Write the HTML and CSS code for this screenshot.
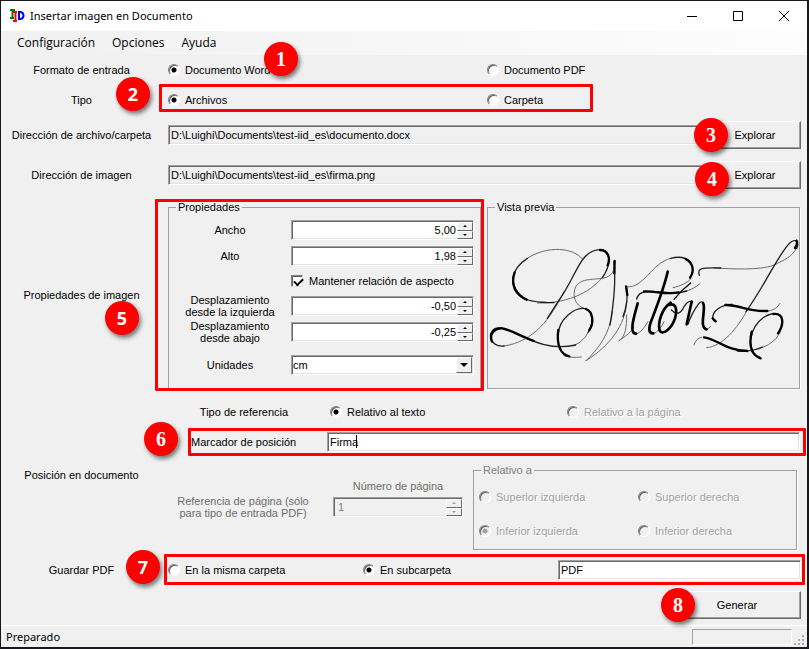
FILE: index.html
```html
<!DOCTYPE html>
<html lang="es">
<head>
<meta charset="utf-8">
<title>Insertar imagen en Documento</title>
<link rel="stylesheet" href="styles.css">
</head>
<body>
<div class="window">
  <header class="titlebar">
    <svg class="app-icon" viewBox="0 0 16 16" aria-hidden="true">
      <path d="M1 2h5M3.500 2v8M1 10h4" stroke="#008000" stroke-width="2" fill="none"/>
      <path d="M4 4h4M6.500 4v9M4 13h4" stroke="#f00" stroke-width="2" fill="none"/>
      <path d="M10 4v7h1.500q3-.5 3-3.500t-3-3.500z" stroke="#00f" stroke-width="2" fill="none"/>
    </svg>
    <h1>Insertar imagen en Documento</h1>
    <button class="caption" aria-label="Minimizar"><svg viewBox="0 0 12 12"><path d="M1 6.500h10"/></svg></button>
    <button class="caption" aria-label="Maximizar"><svg viewBox="0 0 12 12"><path d="M1.500 1.500h9v9h-9z"/></svg></button>
    <button class="caption" aria-label="Cerrar"><svg viewBox="0 0 12 12"><path d="M1 1l10 10M11 1L1 11"/></svg></button>
  </header>
  <nav class="menu"><button>Configuración</button><button>Opciones</button><button>Ayuda</button></nav>

  <main class="form">
    <div class="row">
      <span class="label">Formato de entrada</span>
      <div class="halves">
        <label class="opt"><input type="radio" name="formato" checked>Documento Word</label>
        <label class="opt"><input type="radio" name="formato">Documento PDF</label>
      </div>
      <span class="badge b1">1</span>
    </div>
    <div class="row">
      <span class="label">Tipo</span>
      <div class="halves">
        <label class="opt"><input type="radio" name="tipo" checked>Archivos</label>
        <label class="opt"><input type="radio" name="tipo">Carpeta</label>
      </div>
      <span class="mark m-tipo"></span><span class="badge sans b2">2</span>
    </div>
    <div class="row tall">
      <label class="label" for="archivo">Dirección de archivo/carpeta</label>
      <div class="path"><input class="field ro" id="archivo" type="text" readonly value="D:\Luighi\Documents\test-iid_es\documento.docx"><button class="btn">Explorar</button></div>
      <span class="badge b3">3</span>
    </div>
    <div class="row tall">
      <label class="label" for="imagen">Dirección de imagen</label>
      <div class="path"><input class="field ro" id="imagen" type="text" readonly value="D:\Luighi\Documents\test-iid_es\firma.png"><button class="btn">Explorar</button></div>
      <span class="badge b4">4</span>
    </div>

    <div class="row">
      <span class="label">Propiedades de imagen</span>
      <div class="halves groups">
        <fieldset class="group">
          <legend>Propiedades</legend>
          <div class="props">
            <label for="ancho">Ancho</label>
            <div class="spin"><input class="field" id="ancho" type="text" value="5,00"><span class="steps"><button aria-label="Más"></button><button class="down" aria-label="Menos"></button></span></div>
            <label for="alto">Alto</label>
            <div class="spin"><input class="field" id="alto" type="text" value="1,98"><span class="steps"><button aria-label="Más"></button><button class="down" aria-label="Menos"></button></span></div>
            <label class="opt check"><input type="checkbox" checked>Mantener relación de aspecto</label>
            <label for="dx">Desplazamiento desde la izquierda</label>
            <div class="spin"><input class="field" id="dx" type="text" value="-0,50"><span class="steps"><button aria-label="Más"></button><button class="down" aria-label="Menos"></button></span></div>
            <label for="dy">Desplazamiento desde abajo</label>
            <div class="spin"><input class="field" id="dy" type="text" value="-0,25"><span class="steps"><button aria-label="Más"></button><button class="down" aria-label="Menos"></button></span></div>
            <label for="unidades">Unidades</label>
            <div class="combo"><select class="field" id="unidades"><option>cm</option></select><span class="arrow"></span></div>
          </div>
        </fieldset>
        <fieldset class="group">
          <legend>Vista previa</legend>
          <svg class="signature" viewBox="12 54 933 522" role="img" aria-label="Firma">
            <g class="hair">
              <path d="M295 192C270 158 190 150 130 190"/>
              <path d="M160 324C260 326 330 285 360 240"/>
              <path d="M388 228C370 270 300 235 275 275C264 300 272 332 300 340"/>
              <path d="M240 290C200 370 150 440 60 453"/>
              <path d="M385 350C378 415 345 460 305 498C380 450 424 390 428 320"/>
              <path d="M428 360C428 395 425 425 404 438Q440 415 450 396"/>
              <path d="M428 275C480 282 500 205 560 190M622 250Q605 270 567 278"/>
              <path d="M690 219C780 224 850 224 880 205C915 190 930 175 938 158"/>
              <path d="M790 345C760 400 715 455 668 458"/>
              <path d="M600 291Q630 282 648 266M850 349Q878 345 888 325"/>
              <path d="M270 452Q312 435 325 380M458 417Q475 410 492 380M508 417Q530 405 540 380M665 404Q673 405 680 394"/>
              <path d="M240 482Q262 490 292 486M630 450Q636 430 652 427M825 462Q890 440 894 390"/>
            </g>
            <g class="thin">
              <path d="M130 190C80 222 72 275 110 305Q132 322 210 323"/>
              <path d="M355 248C385 205 380 162 345 164C285 170 280 240 222 320L190 370"/>
              <path d="M390 200C397 270 385 350 378 390M428 278C432 310 425 345 417 365"/>
              <path d="M60 453C15 458 5 404 42 399M130 430C180 455 230 460 275 450"/>
              <path d="M222 420C225 370 275 335 302 341C330 350 330 390 312 412M560 190Q600 180 620 202"/>
              <path d="M938 160C947 143 935 130 920 142C885 172 850 260 786 350"/>
              <path d="M646 241C638 216 660 218 710 219"/>
              <path d="M689 377C677 350 715 327 745 328M760 468Q800 472 835 456M800 430C812 370 865 345 885 360"/>
              <path d="M458 312C465 280 510 290 550 293Q580 296 608 288"/>
              <path d="M562 345Q585 368 600 335Q615 312 624 322M612 388Q625 350 645 325Q652 317 658 324"/>
            </g>
            <g class="bold">
              <path d="M92 232C78 270 98 300 128 314"/>
              <path d="M348 165C372 165 380 190 371 211"/>
              <path d="M392 198L391 235M426 274L430 300"/>
              <path d="M24 440C14 415 34 398 55 400C80 405 120 428 150 438"/>
              <path d="M306 342C328 350 330 385 316 405M223 405C216 452 232 480 256 484"/>
              <path d="M605 192C628 204 632 228 618 248"/>
              <path d="M686 370L695 379M724 330C765 328 788 350 850 348"/>
              <path d="M660 427C695 430 725 467 790 468"/>
              <path d="M868 357C902 354 900 389 882 415M803 410C793 455 802 480 830 490"/>
              <path d="M938 137Q942 145 933 159M480 289C515 288 550 300 584 292"/>
            </g>
            <g class="heavy">
              <path d="M461 325C452 360 433 415 456 416"/>
              <path d="M551 230C540 280 516 340 499 385Q490 416 508 415"/>
              <path d="M560 323C535 340 520 380 527 407C538 423 564 398 573 370C581 342 575 323 555 330"/>
              <path d="M623 320L608 388M657 324C668 340 643 398 668 403"/>
              <path d="M620 264Q595 283 570 313" class="accent"/>
            </g>
          </svg>
        </fieldset>
      </div>
      <span class="mark m-props"></span><span class="badge sans b5">5</span>
    </div>

    <div class="row">
      <span class="label">Posición en documento</span>
      <div class="position">
        <div class="reference">
          <span class="center">Tipo de referencia</span>
          <label class="opt"><input type="radio" name="ref" checked>Relativo al texto</label>
          <label class="opt"><input type="radio" name="ref" disabled>Relativo a la página</label>
        </div>
        <div class="marker">
          <label for="marcador">Marcador de posición</label>
          <div class="edit"><input class="field" id="marcador" type="text" value="Firma"><span class="caret"></span></div>
          <span class="mark m-marker"></span><span class="badge b6">6</span>
        </div>
        <div class="page">
          <span class="center dim">Referencia de página (sólo para tipo de entrada PDF)</span>
          <div class="number">
            <label class="dim" for="pagina">Número de página</label>
            <div class="spin"><input class="field left" id="pagina" type="text" value="1" disabled><span class="steps"><button disabled aria-label="Más"></button><button class="down" disabled aria-label="Menos"></button></span></div>
          </div>
          <fieldset class="group corners" disabled>
            <legend>Relativo a</legend>
            <div class="corner-grid">
              <label class="opt"><input type="radio" name="rel">Superior izquierda</label>
              <label class="opt"><input type="radio" name="rel">Superior derecha</label>
              <label class="opt"><input type="radio" name="rel" checked>Inferior izquierda</label>
              <label class="opt"><input type="radio" name="rel">Inferior derecha</label>
            </div>
          </fieldset>
        </div>
      </div>
    </div>

    <div class="row">
      <span class="label">Guardar PDF</span>
      <div class="save">
        <label class="opt"><input type="radio" name="guardar">En la misma carpeta</label>
        <label class="opt"><input type="radio" name="guardar" checked>En subcarpeta</label>
        <input class="field" type="text" value="PDF" aria-label="Subcarpeta">
      </div>
      <span class="mark m-save"></span><span class="badge sans b7">7</span>
    </div>
    <div class="actions"><button class="btn wide">Generar</button><span class="badge b8">8</span></div>
  </main>

  <footer class="status"><span>Preparado</span><div class="progress"></div>
    <svg class="grip" viewBox="0 0 12 12" aria-hidden="true"><path d="M8 0h2v2h-2zM4 4h2v2h-2zM8 4h2v2h-2zM0 8h2v2h-2zM4 8h2v2h-2zM8 8h2v2h-2z"/></svg>
  </footer>
</div>
</body>
</html>
```
FILE: styles.css
```css
* { box-sizing: border-box; }
body {
  margin: 0;
  padding: 1px 2px 2px 1px;
  min-height: 100vh;
  background: #17171c;
  font: 11px/12px "Liberation Sans", Arial, sans-serif;
  color: #000;
}
button, input, select { font: inherit; color: inherit; margin: 0; border-radius: 0; }
.window { background: #f0f0f0; }

.titlebar { display: flex; align-items: center; height: 30px; background: #fff; padding-left: 8px; }
.titlebar h1 { flex: 1; margin: 0 0 0 5px; font: 11px/16px "Noto Sans", sans-serif; }
.app-icon { width: 16px; height: 16px; }
.caption { width: 46px; height: 30px; padding: 0; border: 0; background: none; }
.caption svg { display: block; width: 12px; height: 12px; margin: 0 auto; fill: none; stroke: #000; }
.menu { display: flex; height: 24px; padding-left: 8px; background: linear-gradient(90deg, #f0f0f0, #fdfdfd); }
.menu button { border: 0; background: none; padding: 0 8px; margin-right: 1px; font: 12px/24px "Open Sans", sans-serif; }

.form { padding: 0 1px 0 0; }
.row {
  position: relative;
  display: grid;
  grid-template-columns: 161px minmax(0, 1fr);
  column-gap: 6px;
  align-items: center;
  min-height: 30px;
}
.row.tall { min-height: 40px; }
.label, .center { text-align: center; }
.dim { color: #6d6d6d; }
.halves { display: grid; grid-template-columns: 1fr 1fr; }

.opt { display: flex; align-items: center; gap: 5px; white-space: nowrap; }
.opt input[type=radio] {
  appearance: none;
  flex: none;
  width: 12px;
  height: 12px;
  border: 1px solid;
  border-color: #808080 #fff #fff #808080;
  border-radius: 50%;
  background: #fff;
  box-shadow: inset 1px 1px 0 #606060;
}
.opt input[type=radio]:checked { background: radial-gradient(circle, #000 2px, #fff 3px); }
.opt input:disabled { background: #f0f0f0; }
.opt input[type=radio]:disabled:checked { background: radial-gradient(circle, #a0a0a0 2px, #f0f0f0 3px); }
.opt:has(:disabled) { color: #a0a0a0; text-shadow: 1px 1px #fff; }
.opt input[type=checkbox] {
  appearance: none;
  flex: none;
  width: 12px;
  height: 12px;
  border: 1px solid;
  border-color: #808080 #e3e3e3 #e3e3e3 #808080;
  background: #fff;
  box-shadow: inset 1px 1px 0 #606060;
}
.props .check { position: relative; grid-column: 2; gap: 6px; padding: 0; }
.check::after {
  content: "";
  position: absolute;
  left: 3px;
  top: 3px;
  width: 7px;
  height: 4px;
  border: solid #000;
  border-width: 0 0 2px 2px;
  rotate: -45deg;
}

.field {
  display: block;
  width: 100%;
  height: 20px;
  padding: 0 2px;
  border: 1px solid;
  border-color: #a0a0a0 #fff #fff #a0a0a0;
  background: #fff;
  box-shadow: inset 1px 1px #696969, inset -1px -1px #e3e3e3;
  outline: 0;
}
.field.ro { background: #f0f0f0; }
.field:disabled { background: #f0f0f0; color: #808080; padding-left: 4px; }
.path { display: flex; align-items: center; gap: 6px; padding-right: 5px; }
.path .field { flex: 1; min-width: 0; }
.btn {
  width: 92px;
  height: 28px;
  padding: 0;
  border: 1px solid;
  border-color: #fff #696969 #696969 #fff;
  background: #f0f0f0;
  box-shadow: inset -1px -1px #a0a0a0;
}
.btn.wide { width: 128px; }

.groups { height: 200px; padding: 6px 6px 6px 0; gap: 6px; }
.group { margin: 0; min-width: 0; padding: 0; border: 1px solid #a0a0a0; box-shadow: 1px 1px #fff; }
.group legend { margin-left: 7px; padding: 0 2px; height: 12px; }
.props {
  display: grid;
  grid-template-columns: 116px minmax(0, 1fr);
  grid-template-rows: 26px 26px 24px 26px 26px 40px;
  column-gap: 3px;
  padding: 4px 6px 0 3px;
  align-items: center;
  text-align: center;
}
.props label { padding: 0 10px; }
.spin, .combo, .edit { position: relative; }
.spin .field { text-align: right; padding-right: 17px; }
.spin .left { text-align: left; }
.steps { position: absolute; top: 2px; right: 1px; bottom: 1px; width: 16px; display: grid; grid-template-rows: 1fr 1fr; }
.steps button {
  display: grid;
  place-items: center;
  min-height: 0;
  padding: 0;
  border: 1px solid;
  border-color: #fff #696969 #696969 #fff;
  background: #f0f0f0;
}
.steps button::before { content: ""; border: 2px solid transparent; border-top: 0; border-bottom: 2px solid #000; }
.steps .down::before { rotate: 180deg; }
.steps :disabled::before { border-bottom-color: #a0a0a0; }
.combo select { appearance: none; padding: 0 1px; }
.arrow {
  position: absolute;
  top: 2px;
  right: 2px;
  bottom: 2px;
  width: 16px;
  display: grid;
  place-items: center;
  pointer-events: none;
  border: 1px solid;
  border-color: #fff #696969 #696969 #fff;
  background: #f0f0f0;
}
.arrow::before { content: ""; border: 4px solid transparent; border-top-color: #000; border-bottom: 0; }

.signature { display: block; width: 100%; height: 174px; fill: none; stroke: #000; stroke-linecap: round; }
.hair { stroke-width: 3; opacity: .55; }
.thin { stroke-width: 4; opacity: .85; }
.bold { stroke-width: 7; }
.heavy { stroke-width: 8; }
.heavy .accent { stroke-width: 4; }

.position { height: 160px; display: grid; grid-template-rows: 33px 28px 1fr; }
.reference { display: grid; grid-template-columns: 152px 232px 1fr; column-gap: 5px; align-items: center; padding-left: 5px; }
.reference .center { padding-right: 10px; }
.marker { position: relative; display: grid; grid-template-columns: 130px 1fr; column-gap: 6px; align-items: center; padding: 0 6px 0 23px; }
.caret { position: absolute; left: 29px; top: 3px; width: 1px; height: 13px; background: #000; }
.page { display: grid; grid-template-columns: 150px 130px 1fr; column-gap: 10px; padding: 8px 9px 5px 5px; }
.page > .center { align-self: center; margin-right: 10px; }
.page .spin { margin-top: 5px; }
.number { padding-top: 16px; text-align: center; }
.number label { display: block; }
.corners legend { color: #808080; }
.corner-grid { display: grid; grid-template-columns: 159px 1fr; grid-template-rows: 34px 34px; align-items: center; padding: 4px 0 0 5px; }

.save { display: grid; grid-template-columns: 195fr 195fr 243fr; align-items: center; padding-right: 5px; }
.actions { position: relative; display: flex; justify-content: flex-end; height: 40px; padding: 6px 5px 0 0; }

.status { display: flex; align-items: center; height: 22px; padding: 0 1px 0 5px; border-top: 1px solid #fff; font: 11px/16px "Noto Sans", sans-serif; }
.status span { flex: 1; }
.progress { width: 100px; height: 16px; margin-right: 2px; border: 1px solid; border-color: #a0a0a0 #fff #fff #a0a0a0; }
.grip { width: 12px; height: 12px; align-self: flex-end; fill: #a8a8a8; }

.mark { position: absolute; border: 3px solid #f00; border-radius: 1px; pointer-events: none; }
.m-tipo { left: 158px; top: -1px; width: 434px; height: 28px; }
.m-props { left: 154px; top: 4px; width: 329px; height: 192px; }
.m-marker { left: 20px; right: 0; top: 0; bottom: 0; }
.m-save { left: 163px; right: 1px; top: -1px; bottom: 0; }
.badge {
  position: absolute;
  z-index: 1;
  width: 34px;
  height: 34px;
  border-radius: 50%;
  background: #f00;
  color: #fff;
  font: bold 20px/34px "Liberation Serif", serif;
  text-align: center;
  box-shadow: 2px 3px 4px rgba(0, 0, 0, .5);
}
.badge.sans { font: bold 18px/34px "Open Sans", sans-serif; }
.b1 { left: 263px; top: -13px; }
.b2 { left: 115px; top: -8px; }
.b3 { right: 78px; top: 3px; }
.b4 { right: 77px; top: 7px; }
.b5 { left: 104px; top: 106px; }
.b6 { left: -24px; top: -6px; }
.b7 { left: 125px; top: -5px; }
.b8 { right: 111px; top: 3px; }
```
